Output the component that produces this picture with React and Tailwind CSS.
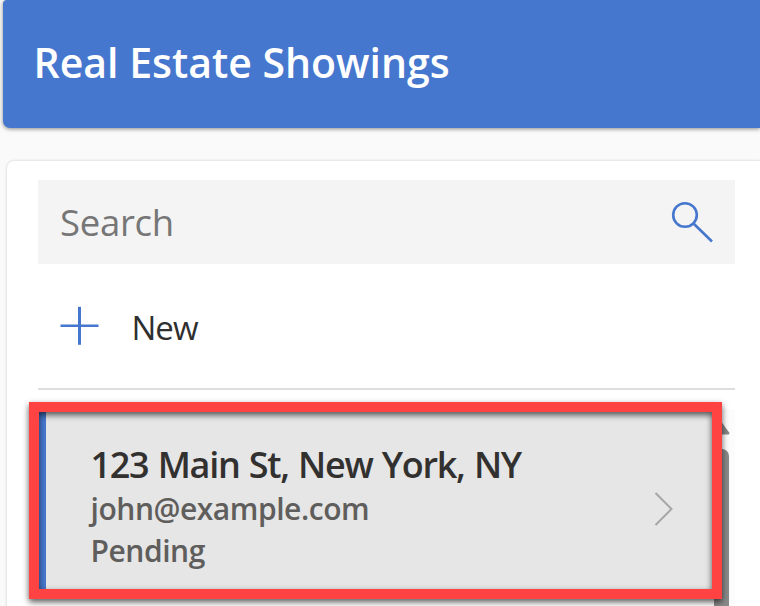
function Header() {
  return (
    <header className="ml-[2.5px] h-[127.5px] shrink-0 rounded-bl-[7px] rounded-tl-[4px] bg-[#4677ce] pl-[31px] shadow-[0_1px_4px_rgba(0,0,0,0.45)]">
      <h1 className="pt-[34px] text-[41px] leading-[56px] font-semibold whitespace-nowrap text-white">
        Real Estate Showings
      </h1>
    </header>
  );
}

function SearchBox() {
  return (
    <div className="flex h-[84px] w-[697px] items-center justify-between bg-[#f4f4f4] pr-[20px] pl-[22.5px]">
      <span className="text-[36.5px] leading-[50px] tracking-[-0.3px] text-[#767676]">Search</span>
      <svg className="size-[44px]" viewBox="0 0 44 44" fill="none" stroke="#4677ce" strokeWidth="2.6">
        <circle cx="14" cy="15" r="11.8" />
        <path d="M22.5 23.5 L41 41.5" />
      </svg>
    </div>
  );
}

function NewButton() {
  return (
    <div className="flex h-[123px] w-[697px] items-center border-b-2 border-[#dedede] pb-[3px]">
      <svg className="ml-[22px] size-[40px]" viewBox="0 0 40 40" fill="none" stroke="#4677ce">
        <path d="M0.5 19.8 H38.5" strokeWidth="2.6" />
        <path d="M19.5 0.8 V38.8" strokeWidth="3" />
      </svg>
      <span className="ml-8 pt-[4px] text-[33px] leading-[46px] tracking-[-1px] text-[#2f2f2f]">New</span>
    </div>
  );
}

function Row() {
  return (
    <div className="flex h-[197px] w-[676px] items-center border-l-8 border-[#4677ce] bg-[#e6e6e6] pt-[13px]">
      <div className="flex grow flex-col pb-px pl-[45px] font-[570] whitespace-nowrap">
        <span className="text-[36px] leading-[47px] tracking-[-1.3px] [word-spacing:1.3px] text-[#323130]">
          123 Main St, New York, NY
        </span>
        <span className="text-[30px] leading-[42px] tracking-[-0.45px] text-[#605e5c]">john@example.com</span>
        <span className="text-[30px] leading-[42px] tracking-[-0.45px] text-[#605e5c]">Pending</span>
      </div>
      <svg className="mt-[3px] mr-[38px] h-[36px] w-[22px]" viewBox="0 0 22 36" fill="none" stroke="#a6a6a6" strokeWidth="2">
        <path d="M1.5 2 L17.5 18 L1.5 34" />
      </svg>
    </div>
  );
}

function Scrollbar() {
  return (
    <div className="flex w-[21px] flex-col bg-[#fcfcfc]">
      <svg className="mt-[12px] h-[14px] w-[16px] shrink-0" viewBox="0 0 16 14" fill="#858585">
        <path d="M7.5 1 L15.5 12 Q15.5 13.5 14 13.5 H1 Z" />
      </svg>
      <div className="mt-[14px] w-[15px] grow rounded-t-[7px] bg-[#8a8a8a]" />
    </div>
  );
}

export default function App() {
  return (
    <div className="relative flex h-[606px] w-[760px] flex-col overflow-hidden bg-[#fafafa] font-['Open_Sans',sans-serif]">
      <Header />
      <main className="mt-[33.5px] ml-[7px] h-[480px] shrink-0 rounded-tl-[7px] bg-white pt-[18.5px] pl-[30.5px] shadow-[0_0_3px_rgba(0,0,0,0.2)]">
        <SearchBox />
        <div className="mt-[3.5px]">
          <NewButton />
        </div>
        <div className="mt-[19px] flex h-[197px] w-[697px]">
          <div className="-mt-[7px]">
            <Row />
          </div>
          <Scrollbar />
        </div>
      </main>
      <div className="absolute top-[402px] left-[29px] h-[197px] w-[693px] border-10 border-[#ff4242] drop-shadow-[0_3px_3px_rgba(0,0,0,0.65)]" />
    </div>
  );
}
